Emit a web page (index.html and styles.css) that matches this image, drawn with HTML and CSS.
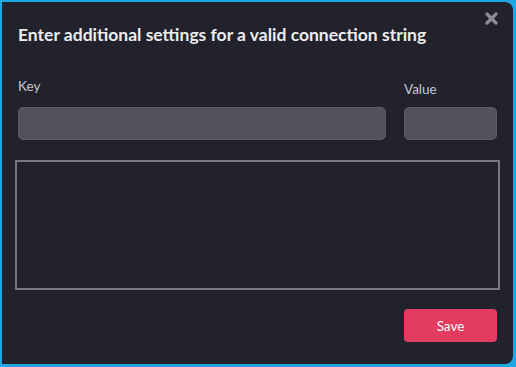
FILE: index.html
```html
<!DOCTYPE html>
<html lang="en">

<head>
    <meta charset="UTF-8">
    <meta name="viewport" content="width=device-width, initial-scale=1.0">
    <title>Connection settings</title>
    <link rel="stylesheet" href="styles.css">
</head>

<body>
    <div class="dialog">
        <button class="close" type="button" aria-label="Close">
            <svg width="13" height="13" viewBox="0 0 13 13">
                <path d="M2 2 L11 11 M11 2 L2 11" stroke="currentColor" stroke-width="3.2" stroke-linecap="round" />
            </svg>
        </button>
        <h1>Enter additional settings for a valid connection string</h1>
        <form class="fields">
            <div class="field key">
                <label for="key">Key</label>
                <input type="text" id="key">
            </div>
            <div class="field value">
                <label for="value">Value</label>
                <input type="text" id="value">
            </div>
        </form>
        <textarea class="settings"></textarea>
        <div class="actions">
            <button class="save" type="button">Save</button>
        </div>
    </div>
</body>

</html>
```

FILE: styles.css
```css
* {
    margin: 0;
    padding: 0;
    box-sizing: border-box;
}

html,
body {
    height: 100%;
}

body {
    font-family: Lato, "Open Sans", sans-serif;
    background-color: #1ea7e1;
    padding: 2px 3px 3px 2px;
    color: #e8e8ec;
}

.dialog {
    position: relative;
    height: 100%;
    background-color: #22222c;
    border-radius: 0 8px 8px 0;
    padding: 22px 13px 0 13px;
}

.close {
    position: absolute;
    top: 10px;
    right: 15px;
    background: none;
    border: none;
    color: #8c8c94;
    cursor: pointer;
    line-height: 0;
}

h1 {
    font-size: 17.5px;
    font-weight: bold;
    color: #ececf0;
    padding-left: 3px;
}

.fields {
    display: flex;
    gap: 18px;
    margin-top: 33px;
    padding: 0 3px;
}

.field label {
    display: block;
    font-size: 13.5px;
    color: #c8c8cc;
    margin-bottom: 13px;
}

.field.key {
    flex: 1;
}

.field.value {
    width: 93px;
    padding-top: 3px;
}

.field.value label {
    margin-bottom: 10px;
}

.field input {
    width: 100%;
    height: 33px;
    background-color: #52525c;
    border: 1px solid #5c5c66;
    border-radius: 5px;
}

.settings {
    display: block;
    width: 485px;
    height: 130px;
    margin-top: 20px;
    background-color: #22222c;
    border: 2px solid #77777f;
    resize: none;
}

.actions {
    display: flex;
    justify-content: flex-end;
    margin-top: 19px;
    padding-right: 3px;
}

.save {
    width: 93px;
    height: 33px;
    background-color: #e33c60;
    color: white;
    border: none;
    border-radius: 4px;
    font-family: Lato, sans-serif;
    font-size: 13.5px;
    cursor: pointer;
}
```
